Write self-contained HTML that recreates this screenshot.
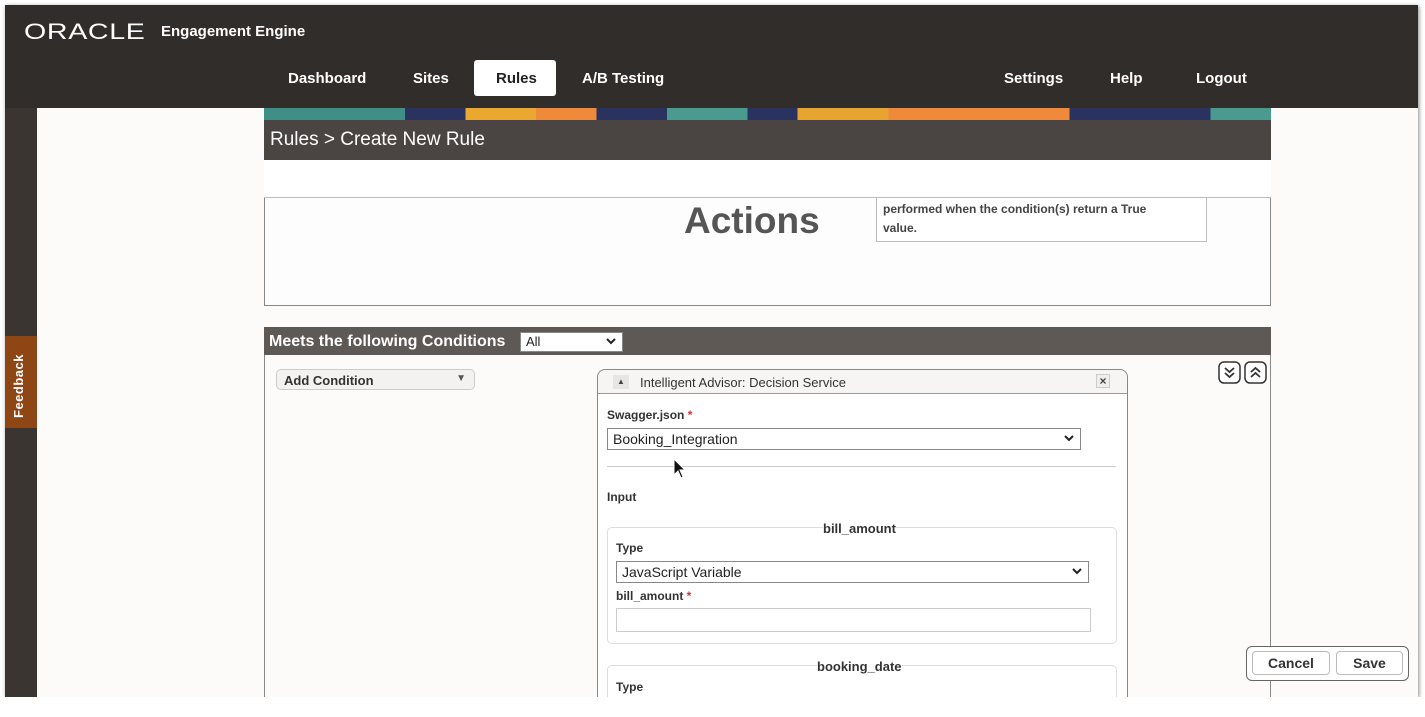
<!DOCTYPE html>
<html><head><style>
*{box-sizing:border-box;margin:0;padding:0}
body{width:1425px;height:706px;background:#fff;font-family:"Liberation Sans",sans-serif;position:relative;overflow:hidden;color:#333}
.a{position:absolute}
.nav{color:#fff;font-weight:bold;font-size:15px}
.sel{background:#fff;border:1px solid #888;font-size:14px;color:#222;padding-left:5px}
.chev{position:absolute;right:6px;top:50%;margin-top:-4px}
.lbl{font-weight:bold;font-size:12px;color:#333}
</style></head><body>
<div class="a" style="left:5px;top:5px;width:1413px;height:692px;background:#fcfbfa;box-shadow:1px 1px 4px #888"></div>
<div class="a" style="left:5px;top:5px;width:1413px;height:103px;background:#312d2a"></div>
<div class="a" style="left:5px;top:108px;width:32px;height:589px;background:#3a3531"></div>
<div class="a" style="left:24px;top:19px;color:#fff;font-size:22px;letter-spacing:0.5px;transform:scaleX(1.3);transform-origin:0 0">ORACLE</div>
<div class="a" style="left:161px;top:23px;color:#fff;font-size:15px;font-weight:bold">Engagement Engine</div>
<div class="a nav" style="left:288px;top:70px">Dashboard</div>
<div class="a nav" style="left:413px;top:70px">Sites</div>
<div class="a" style="left:474px;top:60px;width:82px;height:36px;background:#fff;border-radius:3px"></div>
<div class="a nav" style="left:496px;top:70px;color:#222">Rules</div>
<div class="a nav" style="left:582px;top:70px">A/B Testing</div>
<div class="a nav" style="left:1004px;top:70px">Settings</div>
<div class="a nav" style="left:1110px;top:70px">Help</div>
<div class="a nav" style="left:1196px;top:70px">Logout</div>
<div class="a" style="left:264px;top:108px;width:1007px;height:12px;background:linear-gradient(90deg,#3f8f86 0 14%,#2a3360 14% 20%,#eaa830 20% 27%,#ee8a3a 27% 33%,#2a3360 33% 40%,#4a9a90 40% 48%,#2a3360 48% 53%,#e8a430 53% 62%,#ee8a3a 62% 80%,#2a3360 80% 94%,#4a9a90 94%)"></div>
<div class="a" style="left:264px;top:120px;width:1007px;height:40px;background:#4a4542"></div>
<div class="a" style="left:270px;top:129px;color:#fff;font-size:19px">Rules &gt; Create New Rule</div>
<div class="a" style="left:264px;top:160px;width:1007px;height:38px;background:#fff;border-bottom:1px solid #bbb"></div>
<div class="a" style="left:264px;top:198px;width:1007px;height:108px;border:1px solid #888;border-top:none;background:#fdfdfd"></div>
<div class="a" style="left:684px;top:200px;font-size:37px;font-weight:bold;color:#555">Actions</div>
<div class="a" style="left:876px;top:198px;width:331px;height:44px;border:1px solid #bbb;border-top:none;background:#fff;font-size:12px;font-weight:bold;color:#444;padding:2px 6px;line-height:19px">performed when the condition(s) return a True<br>value.</div>
<div class="a" style="left:264px;top:327px;width:1007px;height:28px;background:#5f5955"></div>
<div class="a" style="left:269px;top:333px;color:#fff;font-size:16px;font-weight:bold">Meets the following Conditions</div>
<div class="a sel" style="left:520px;top:332px;width:103px;height:20px;font-size:13px;line-height:18px">All<svg class="chev" width="10" height="7" viewBox="0 0 10 7"><path d="M1 1l4 4 4-4" fill="none" stroke="#222" stroke-width="2"/></svg></div>
<div class="a" style="left:264px;top:355px;width:1007px;height:342px;border-left:1px solid #888;border-right:1px solid #888"></div>
<div class="a" style="left:5px;top:336px;width:32px;height:92px;background:#8f4615"></div>
<div class="a" style="left:11px;top:418px;transform:rotate(-90deg);transform-origin:0 0;color:#fff;font-weight:bold;font-size:13px;letter-spacing:.5px">Feedback</div>
<div class="a" style="left:276px;top:369px;width:199px;height:21px;border:1px solid #ccc;border-radius:5px;background:#f3f2f1;font-size:13px;font-weight:bold;color:#333;padding:3px 7px">Add Condition<span style="position:absolute;right:8px;top:3px;font-size:10px;color:#555">&#9660;</span></div>
<svg class="a" style="left:1218px;top:361px" width="50" height="24" viewBox="0 0 50 24"><rect x="1" y="1" width="21" height="21" rx="5" fill="#fff" stroke="#333" stroke-width="1.5"/><path d="M7 7l4.5 4 4.5-4M7 12l4.5 4 4.5-4" fill="none" stroke="#333" stroke-width="1.8"/><rect x="27" y="1" width="21" height="21" rx="5" fill="#fff" stroke="#333" stroke-width="1.5"/><path d="M33 11l4.5-4 4.5 4M33 16l4.5-4 4.5 4" fill="none" stroke="#333" stroke-width="1.8"/></svg>
<div class="a" style="left:597px;top:369px;width:531px;height:340px;border:1px solid #888;border-radius:8px 8px 0 0;background:#fff"></div>
<div class="a" style="left:598px;top:370px;width:529px;height:24px;background:#f6f5f4;border-bottom:1px solid #999;border-radius:8px 8px 0 0"></div>
<div class="a" style="left:613px;top:375px;width:16px;height:14px;background:#e6e6e6;font-size:8px;text-align:center;line-height:14px;color:#444">&#9650;</div>
<div class="a" style="left:640px;top:375px;font-size:13px;color:#333">Intelligent Advisor: Decision Service</div>
<div class="a" style="left:1096px;top:374px;width:14px;height:14px;border:1px solid #ccc;background:#eee;font-size:12px;font-weight:bold;text-align:center;line-height:12px;color:#444">&#215;</div>
<div class="a lbl" style="left:607px;top:408px">Swagger.json <span style="color:#c33">*</span></div>
<div class="a sel" style="left:607px;top:428px;width:474px;height:22px;line-height:20px">Booking_Integration<svg class="chev" width="10" height="7" viewBox="0 0 10 7"><path d="M1 1l4 4 4-4" fill="none" stroke="#222" stroke-width="2"/></svg></div>
<div class="a" style="left:607px;top:466px;width:509px;height:1px;background:#ccc"></div>
<div class="a lbl" style="left:607px;top:490px">Input</div>
<div class="a" style="left:607px;top:527px;width:510px;height:117px;border:1px solid #ddd;border-radius:5px"></div>
<div class="a" style="left:823px;top:521px;font-size:13px;font-weight:bold;background:#fff;color:#333">bill_amount</div>
<div class="a lbl" style="left:616px;top:541px">Type</div>
<div class="a sel" style="left:616px;top:561px;width:473px;height:22px;line-height:20px">JavaScript Variable<svg class="chev" width="10" height="7" viewBox="0 0 10 7"><path d="M1 1l4 4 4-4" fill="none" stroke="#222" stroke-width="2"/></svg></div>
<div class="a lbl" style="left:616px;top:589px">bill_amount <span style="color:#c33">*</span></div>
<div class="a" style="left:616px;top:608px;width:475px;height:24px;border:1px solid #ccc;background:#fff"></div>
<div class="a" style="left:607px;top:665px;width:510px;height:40px;border:1px solid #ddd;border-radius:5px"></div>
<div class="a" style="left:817px;top:659px;font-size:13px;font-weight:bold;background:#fff;color:#333">booking_date</div>
<div class="a lbl" style="left:616px;top:680px">Type</div>
<div class="a" style="left:0;top:697px;width:1425px;height:20px;background:#fff;z-index:5"></div>
<svg class="a" style="left:673px;top:458px" width="14" height="22" viewBox="0 0 14 22"><path d="M1 1v16l4-4 3 7 2-1-3-7h5z" fill="#111" stroke="#fff" stroke-width="1"/></svg>
<div class="a" style="left:1246px;top:646px;width:163px;height:35px;border:1.5px solid #666;border-radius:6px;background:#fff"></div>
<div class="a" style="left:1252px;top:651px;width:78px;height:24px;border:1px solid #bbb;border-radius:4px;text-align:center;font-size:14px;font-weight:bold;line-height:22px">Cancel</div>
<div class="a" style="left:1336px;top:651px;width:67px;height:24px;border:1px solid #bbb;border-radius:4px;text-align:center;font-size:14px;font-weight:bold;line-height:22px">Save</div>
</body></html>
